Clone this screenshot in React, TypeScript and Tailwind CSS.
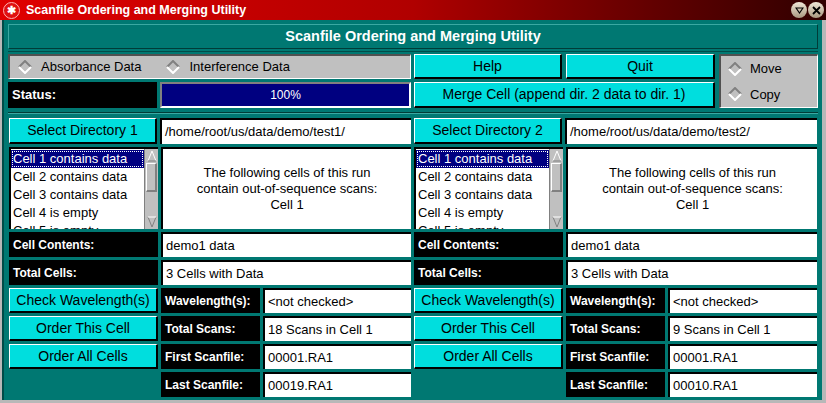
import React from "react";

const font = { fontFamily: '"Liberation Sans", Arial, sans-serif' };

function Btn({ children, className = "" }: { children: React.ReactNode; className?: string }) {
  return (
    <div
      className={`flex items-center justify-center bg-[#00dede] text-black text-[14px] border-t border-l border-t-white border-l-white border-b-2 border-r-2 border-b-black border-r-black whitespace-nowrap ${className}`}
    >
      {children}
    </div>
  );
}

function Label({ children, className = "" }: { children: React.ReactNode; className?: string }) {
  return (
    <div className={`flex items-center bg-black text-white font-bold text-[12px] pl-[4px] whitespace-nowrap ${className}`}>
      {children}
    </div>
  );
}

function Field({ children, className = "" }: { children: React.ReactNode; className?: string }) {
  return (
    <div
      className={`flex items-center bg-white text-black text-[13px] pl-[3px] border-t-2 border-l-2 border-t-black border-l-black whitespace-nowrap ${className}`}
    >
      {children}
    </div>
  );
}

function Diamond() {
  return (
    <svg width="14" height="14" viewBox="0 0 14 14" className="shrink-0">
      <path d="M7 1 L13 7 L7 13 L1 7 Z" fill="#c0c0c0" />
      <path d="M1 7 L7 1 L13 7" fill="none" stroke="#808080" strokeWidth="2" />
      <path d="M1 7 L7 13 L13 7" fill="none" stroke="#ffffff" strokeWidth="2" />
    </svg>
  );
}

function ListBox() {
  const items = ["Cell 1 contains data", "Cell 2 contains data", "Cell 3 contains data", "Cell 4 is empty", "Cell 5 is empty"];
  return (
    <div className="flex w-[149px] h-[82px] bg-white border-t-2 border-l-2 border-t-black border-l-black overflow-hidden">
      <div className="flex-1 overflow-hidden text-[13px] leading-[18px] pt-[1px]">
        {items.map((t, i) => (
          <div
            key={t}
            className={`pl-[2px] whitespace-nowrap ${i === 0 ? "bg-[#000080] text-white outline outline-1 outline-dotted outline-white -outline-offset-2" : "text-black"}`}
          >
            {t}
          </div>
        ))}
      </div>
      <div className="w-[14px] bg-[#c0c0c0] flex flex-col border-l border-l-[#808080]">
        <div className="h-[14px] flex items-center justify-center">
          <svg width="10" height="12" viewBox="0 0 10 12">
            <path d="M1 11 L5 1 L9 11" fill="none" stroke="#ffffff" strokeWidth="1" />
            <path d="M1 11 L9 11" stroke="#808080" strokeWidth="1" />
          </svg>
        </div>
        <div className="h-[29px] mx-[1px] bg-[#c0c0c0] border-t border-l border-t-white border-l-white border-b-2 border-r-2 border-b-[#808080] border-r-[#808080]" />
        <div className="flex-1" />
        <div className="h-[14px] flex items-center justify-center">
          <svg width="10" height="12" viewBox="0 0 10 12">
            <path d="M1 1 L5 11 L9 1" fill="none" stroke="#808080" strokeWidth="1" />
            <path d="M1 1 L9 1" stroke="#ffffff" strokeWidth="1" />
          </svg>
        </div>
      </div>
    </div>
  );
}

function Half({
  dir,
  path,
  scans,
  last,
  width,
}: {
  dir: string;
  path: string;
  scans: string;
  last: string;
  width: string;
}) {
  return (
    <div className={`flex flex-col gap-[3px] ${width}`}>
      <div className="flex gap-[3px] h-[26px]">
        <Btn className="w-[148px]">Select Directory {dir}</Btn>
        <Field className="flex-1">{path}</Field>
      </div>
      <div className="flex gap-[3px] h-[82px]">
        <ListBox />
        <div className="flex-1 flex flex-col items-center justify-center bg-white text-black text-[13px] leading-[16px] border-t-2 border-l-2 border-t-black border-l-black text-center">
          <div>The following cells of this run</div>
          <div>contain out-of-sequence scans:</div>
          <div>Cell 1</div>
        </div>
      </div>
      <div className="flex gap-[3px] h-[25px]">
        <Label className="w-[149px]">Cell Contents:</Label>
        <Field className="flex-1">demo1 data</Field>
      </div>
      <div className="flex gap-[3px] h-[25px]">
        <Label className="w-[149px]">Total Cells:</Label>
        <Field className="flex-1">3 Cells with Data</Field>
      </div>
      <div className="flex gap-[3px]">
        <div className="flex flex-col gap-[3px] w-[149px]">
          <Btn className="h-[25px]">Check Wavelength(s)</Btn>
          <Btn className="h-[25px]">Order This Cell</Btn>
          <Btn className="h-[25px]">Order All Cells</Btn>
        </div>
        <div className="flex-1 flex flex-col gap-[3px]">
          {[
            ["Wavelength(s):", "<not checked>"],
            ["Total Scans:", scans],
            ["First Scanfile:", "00001.RA1"],
            ["Last Scanfile:", last],
          ].map(([l, v]) => (
            <div key={l} className="flex gap-[3px] h-[25px]">
              <Label className="w-[99px]">{l}</Label>
              <Field className={`flex-1 ${l === "Wavelength(s):" ? "text-[12px]" : ""}`}>{v}</Field>
            </div>
          ))}
        </div>
      </div>
    </div>
  );
}

export default function App() {
  return (
    <div className="w-[826px] h-[403px] bg-[#b8b8b8] flex flex-col overflow-hidden" style={font}>
      {/* title bar */}
      <div className="h-[20px] flex items-center bg-gradient-to-r from-[#e00000] via-[#b00000] to-[#300000]">
        <div className="ml-[3px] w-[17px] h-[17px] rounded-full bg-[#e01010] border border-[#ffb0b0] flex items-center justify-center">
          <span className="text-white text-[11px] leading-none font-bold">✱</span>
        </div>
        <div className="ml-[6px] text-white font-bold text-[12.5px]">Scanfile Ordering and Merging Utility</div>
        <div className="ml-auto mr-[2px] flex gap-[1px]">
          <div className="w-[16px] h-[16px] rounded-full bg-gradient-to-b from-[#f0e8d8] to-[#a89880] flex items-center justify-center">
            <svg width="9" height="9" viewBox="0 0 9 9">
              <path d="M1 2 L8 2 L4.5 7 Z" fill="none" stroke="#000" strokeWidth="1.2" />
            </svg>
          </div>
          <div className="w-[16px] h-[16px] rounded-full bg-gradient-to-b from-[#f0e8d8] to-[#a89880] flex items-center justify-center">
            <svg width="9" height="9" viewBox="0 0 9 9">
              <path d="M1 1 L8 8 M8 1 L1 8" stroke="#000" strokeWidth="1.8" />
            </svg>
          </div>
        </div>
      </div>

      {/* body */}
      <div className="flex-1 pl-[2px] pr-[4px] pb-[3px] flex">
        <div className="flex-1 bg-[#007872] border-l-2 border-l-[#004c48] pl-[4px] pr-[3px] pt-[4px] flex flex-col">
          {/* header */}
          <div className="h-[25px] w-[810px] flex items-center justify-center text-white font-bold text-[14.5px] border border-t-[#3aa8a2] border-l-[#3aa8a2] border-b-[#003c38] border-r-[#003c38]">
            Scanfile Ordering and Merging Utility
          </div>
          <div className="mt-[2px] h-[1px] w-[810px] bg-[#004c48]" />

          {/* top controls */}
          <div className="mt-[2px] flex gap-[4px]">
            <div className="flex flex-col gap-[3px]">
              <div className="flex h-[25px]">
                <div className="w-[403px] flex items-center bg-[#c0c0c0] text-black text-[13px] border-t-2 border-l-2 border-t-[#505050] border-l-[#505050] border-b border-r border-b-white border-r-white">
                  <div className="ml-[8px] flex items-center gap-[9px]">
                    <Diamond />
                    <span>Absorbance Data</span>
                  </div>
                  <div className="ml-[25px] flex items-center gap-[9px]">
                    <Diamond />
                    <span>Interference Data</span>
                  </div>
                </div>
                <Btn className="w-[148px] ml-[3px]">Help</Btn>
                <Btn className="w-[149px] ml-[4px]">Quit</Btn>
              </div>
              <div className="flex h-[26px]">
                <Label className="w-[149px] text-[13px]">Status:</Label>
                <div className="w-[251px] ml-[3px] flex items-center justify-center bg-[#000080] text-white text-[12px] border-t-2 border-l-2 border-t-[#808080] border-l-[#808080] border-b-2 border-r-2 border-b-white border-r-white">
                  100%
                </div>
                <Btn className="w-[301px] ml-[3px]">Merge Cell (append dir. 2 data to dir. 1)</Btn>
              </div>
            </div>
            <div className="w-[99px] h-[54px] flex flex-col justify-around bg-[#c0c0c0] text-black text-[13px] border-t-2 border-l-2 border-t-[#505050] border-l-[#505050] border-b border-r border-b-white border-r-white pl-[7px]">
              <div className="flex items-center gap-[8px]">
                <Diamond />
                <span>Move</span>
              </div>
              <div className="flex items-center gap-[8px]">
                <Diamond />
                <span>Copy</span>
              </div>
            </div>
          </div>

          {/* separator */}
          <div className="mt-[4px] w-[810px] h-[1px] bg-[#003c38]" />
          <div className="w-[810px] h-[1px] bg-[#3aa8a2]" />

          {/* directory halves */}
          <div className="mt-[4px] ml-[1px] flex gap-[3px]">
            <Half dir="1" width="w-[402px]" path="/home/root/us/data/demo/test1/" scans="18 Scans in Cell 1" last="00019.RA1" />
            <Half dir="2" width="w-[403px]" path="/home/root/us/data/demo/test2/" scans="9 Scans in Cell 1" last="00010.RA1" />
          </div>
        </div>
      </div>
    </div>
  );
}
